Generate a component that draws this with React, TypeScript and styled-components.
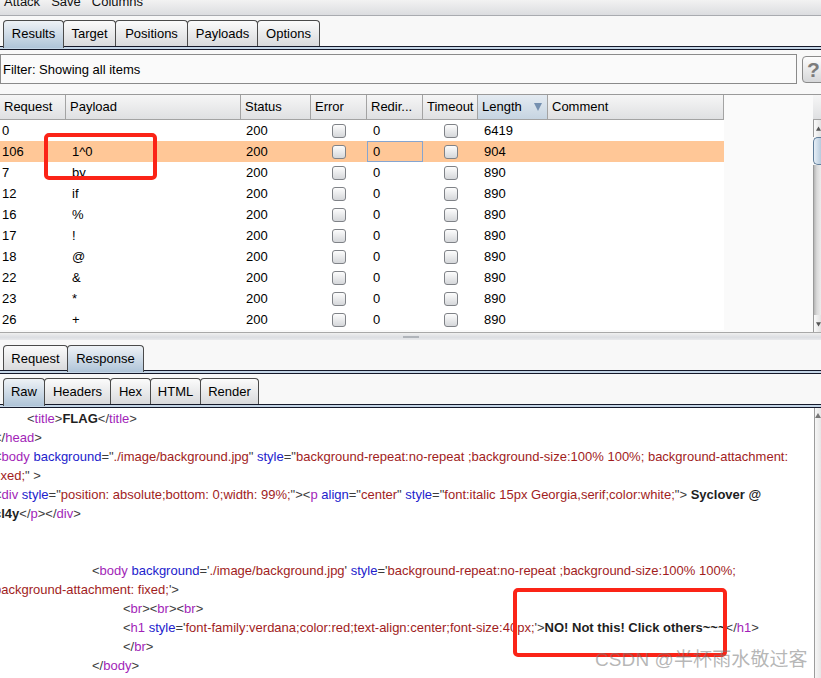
import React from "react";
import styled, { createGlobalStyle, css } from "styled-components";

const GlobalStyle = createGlobalStyle`
  html, body { margin: 0; padding: 0; }
  body {
    background: #f8f8f8;
    font-family: "Liberation Sans", Arial, sans-serif;
    font-size: 13px;
    color: #000;
    overflow: hidden;
  }
`;

const Root = styled.div`
  position: relative;
  width: 821px;
  height: 678px;
  overflow: hidden;
  display: flex;
  flex-direction: column;
  background: #f8f8f8;
`;

const MenuBar = styled.div`
  height: 15px;
  border-bottom: 1px solid #a9abb0;
  background: linear-gradient(#f2f2f2, #dcdde0);
  display: flex;
  gap: 11px;
  padding-left: 4px;
  overflow: hidden;
`;

const MenuItem = styled.span`
  font-size: 13px;
  line-height: 13px;
  margin-top: -5px;
  color: #111;
`;

const TabStrip = styled.div<{ $h: number }>`
  height: ${(p) => p.$h}px;
  display: flex;
  align-items: flex-end;
  padding-left: 3px;
  background: #f8f8f8;
`;

const Tab = styled.div<{ $w: number; $active?: boolean; $h: number }>`
  width: ${(p) => p.$w}px;
  height: ${(p) => p.$h}px;
  box-sizing: border-box;
  border: 1px solid #4a4a4a;
  border-bottom: none;
  border-radius: 4px 4px 0 0;
  margin-left: -1px;
  &:first-child { margin-left: 0; }
  display: flex;
  align-items: center;
  justify-content: center;
  font-size: 13px;
  color: #000;
  position: relative;
  background: linear-gradient(#fbfbfb, #d9dadc);
  ${(p) =>
    p.$active &&
    css`
      background: linear-gradient(#eef2f6, #afc4d8);
      z-index: 1;
      margin-bottom: -2px;
      height: ${p.$h + 2}px;
      padding-bottom: 2px;
    `}
`;

const TabBand = styled.div`
  height: 2px;
  border-top: 1px solid #15192a;
  border-bottom: 1px solid #15192a;
  background: #c4d5e6;
`;

const FilterSection = styled.div`
  height: 45px;
  border-bottom: 1px solid #9a9a9a;
  display: flex;
  align-items: flex-start;
  padding-top: 4px;
  box-sizing: border-box;
  gap: 5px;
`;

const FilterBox = styled.div`
  width: 797px;
  height: 30px;
  box-sizing: border-box;
  border: 1px solid #8a8a8a;
  background: #fafafa;
  display: flex;
  align-items: center;
  padding-left: 2px;
  font-size: 13px;
  flex-shrink: 0;
`;

const HelpButton = styled.div`
  width: 28px;
  height: 27px;
  margin-top: 2px;
  box-sizing: border-box;
  border: 1px solid #8a8a8a;
  border-radius: 4px;
  background: linear-gradient(#fdfdfd, #d6d7d9);
  display: flex;
  align-items: center;
  padding-left: 4px;
  font-size: 21px;
  font-weight: bold;
  color: #7c7c7c;
  flex-shrink: 0;
`;

const TableSection = styled.div`
  height: 238px;
  display: flex;
  border-bottom: 1px solid #a8a8a8;
  box-sizing: border-box;
`;

const Viewport = styled.div`
  flex: 1;
  background: #fafafa;
  display: flex;
  flex-direction: column;
  overflow: hidden;
`;

const cols = [66, 175, 70, 56, 56, 55, 70, 176];
const colTemplate = cols.map((c) => `${c}px`).join(" ") + " 1fr";

const HeaderRow = styled.div`
  display: grid;
  grid-template-columns: ${colTemplate};
  height: 25px;
  flex-shrink: 0;
`;

const HeadCell = styled.div<{ $sorted?: boolean }>`
  box-sizing: border-box;
  border-right: 1px solid #a3a3a3;
  border-bottom: 1px solid #a3a3a3;
  background: ${(p) =>
    p.$sorted ? "linear-gradient(#e4ebf2, #c6d4e1)" : "linear-gradient(#f6f6f6, #dfe0e2)"};
  display: flex;
  align-items: center;
  padding-left: 4px;
  padding-bottom: 1px;
  font-size: 13px;
  white-space: nowrap;
  overflow: hidden;
  position: relative;
`;

const HeadFill = styled.div`
  background: #fafafa;
`;

const SortArrow = styled.span`
  position: absolute;
  right: 5px;
  top: 8px;
  width: 0;
  height: 0;
  border-left: 4px solid transparent;
  border-right: 4px solid transparent;
  border-top: 8px solid #7590b0;
`;

const Row = styled.div<{ $sel?: boolean }>`
  display: grid;
  grid-template-columns: ${colTemplate};
  height: 21px;
  flex-shrink: 0;
  > div:not(:last-child) {
    background: ${(p) => (p.$sel ? "#ffc797" : "#ffffff")};
  }
`;

const Cell = styled.div<{ $pad?: number; $focus?: boolean }>`
  box-sizing: border-box;
  padding-left: ${(p) => p.$pad ?? 2}px;
  display: flex;
  align-items: center;
  font-size: 13px;
  white-space: nowrap;
  ${(p) =>
    p.$focus &&
    css`
      border: 1px solid #86a5d0;
      padding-left: ${(p.$pad ?? 2) - 1}px;
    `}
`;

const CheckCell = styled.div`
  display: flex;
  align-items: center;
  justify-content: center;
`;

const Check = styled.span`
  width: 14px;
  height: 14px;
  box-sizing: border-box;
  border: 1px solid #7f8287;
  border-radius: 3px;
  background: linear-gradient(#fdfdfd, #d5d7da);
`;

const RowFill = styled.div`
  background: #fafafa;
`;

const VScroll = styled.div`
  width: 8px;
  display: flex;
  flex-direction: column;
  flex-shrink: 0;
`;

const ScrollCorner = styled.div`
  height: 25px;
  border-bottom: 1px solid #a3a3a3;
  box-sizing: border-box;
  background: linear-gradient(#f6f6f6, #dfe0e2);
`;

const ScrollArrowBox = styled.div`
  height: 17px;
  background: linear-gradient(90deg, #fafafa, #e2e2e2);
  border-left: 1px solid #9a9a9a;
  display: flex;
  align-items: center;
  padding-left: 2px;
`;

const ScrollThumb = styled.div`
  height: 28px;
  box-sizing: border-box;
  border: 1px solid #5f7c98;
  border-right: none;
  border-radius: 5px 0 0 5px;
  background: linear-gradient(90deg, #e6eef6, #b7cbdd);
`;

const ScrollTrack = styled.div`
  flex: 1;
  border-left: 1px solid #9a9a9a;
  background: linear-gradient(90deg, #b6b6b6, #d9d9d9 40%, #ececec);
`;

const Splitter = styled.div`
  height: 7px;
  background: linear-gradient(#f0f0f0, #dcdee2 60%, #e8e9ec);
  display: flex;
  justify-content: center;
  align-items: center;
`;

const SplitHandle = styled.div`
  width: 16px;
  height: 2px;
  background: #b0b4ba;
`;

const EditorSection = styled.div`
  flex: 1;
  display: flex;
  background: #fff;
  overflow: hidden;
`;

const Editor = styled.div`
  flex: 1;
  overflow: hidden;
  padding-top: 1px;
  margin-left: -6px;
`;

const Line = styled.div<{ $indent?: number }>`
  height: 19px;
  line-height: 19px;
  white-space: pre;
  font-size: 13px;
  padding-left: ${(p) => p.$indent ?? 0}px;
  color: #3c3c3c;
`;

const Br = styled.span`
  color: #3c3c3c;
`;
const Tg = styled.span`
  color: #a21fb8;
`;
const At = styled.span`
  color: #2222cc;
`;
const Vl = styled.span`
  color: #a11d1d;
`;
const Tx = styled.span`
  color: #1e1e1e;
  font-weight: bold;
`;

const EditorScroll = styled.div`
  width: 6px;
  flex-shrink: 0;
  border-left: 1px solid #9c9c9c;
  background: linear-gradient(90deg, #f6f6f6, #e6e6e6);
  display: flex;
  justify-content: center;
  padding-top: 5px;
`;

const RedBox = styled.div<{ $x: number; $y: number; $w: number; $h: number }>`
  position: absolute;
  left: ${(p) => p.$x}px;
  top: ${(p) => p.$y}px;
  width: ${(p) => p.$w}px;
  height: ${(p) => p.$h}px;
  box-sizing: border-box;
  border: 4px solid #fb2417;
  border-radius: 5px;
  pointer-events: none;
`;

const Watermark = styled.div`
  position: absolute;
  left: 595px;
  top: 644px;
  font-family: "Liberation Sans", "Noto Sans CJK SC", sans-serif;
  font-size: 19px;
  color: rgba(120, 120, 120, 0.55);
  white-space: nowrap;
  letter-spacing: 0.1px;
  pointer-events: none;
`;

const UpArrow = ({ color = "#555" }: { color?: string }) => (
  <svg width="6" height="6" viewBox="0 0 6 6">
    <path d="M0 5 L3 0 L6 5 Z" fill={color} />
  </svg>
);
const DownArrow = ({ color = "#555" }: { color?: string }) => (
  <svg width="6" height="6" viewBox="0 0 6 6">
    <path d="M0 1 L3 6 L6 1 Z" fill={color} />
  </svg>
);

const rows = [
  { r: "0", p: "", len: "6419" },
  { r: "106", p: "1^0", len: "904", sel: true },
  { r: "7", p: "by", len: "890" },
  { r: "12", p: "if", len: "890" },
  { r: "16", p: "%", len: "890" },
  { r: "17", p: "!", len: "890" },
  { r: "18", p: "@", len: "890" },
  { r: "22", p: "&", len: "890" },
  { r: "23", p: "*", len: "890" },
  { r: "26", p: "+", len: "890" },
];

const headers = ["Request", "Payload", "Status", "Error", "Redir...", "Timeout", "Length", "Comment"];

export default function App() {
  return (
    <Root>
      <GlobalStyle />
      <MenuBar>
        <MenuItem>Attack</MenuItem>
        <MenuItem>Save</MenuItem>
        <MenuItem>Columns</MenuItem>
      </MenuBar>

      <TabStrip $h={30}>
        <Tab $w={61} $h={26} $active>Results</Tab>
        <Tab $w={53} $h={26}>Target</Tab>
        <Tab $w={73} $h={26}>Positions</Tab>
        <Tab $w={71} $h={26}>Payloads</Tab>
        <Tab $w={63} $h={26}>Options</Tab>
      </TabStrip>
      <TabBand />

      <FilterSection>
        <FilterBox>Filter: Showing all items</FilterBox>
        <HelpButton>?</HelpButton>
      </FilterSection>

      <TableSection>
        <Viewport>
          <HeaderRow>
            {headers.map((h) => (
              <HeadCell key={h} $sorted={h === "Length"}>
                {h}
                {h === "Length" && <SortArrow />}
              </HeadCell>
            ))}
            <HeadFill />
          </HeaderRow>
          {rows.map((row) => (
            <Row key={row.r} $sel={row.sel}>
              <Cell $pad={2}>{row.r}</Cell>
              <Cell $pad={6}>{row.p}</Cell>
              <Cell $pad={5}>200</Cell>
              <CheckCell>
                <Check />
              </CheckCell>
              <Cell $pad={6} $focus={row.sel}>0</Cell>
              <CheckCell>
                <Check />
              </CheckCell>
              <Cell $pad={6}>{row.len}</Cell>
              <Cell />
              <RowFill />
            </Row>
          ))}
        </Viewport>
        <VScroll>
          <ScrollCorner />
          <ScrollArrowBox>
            <UpArrow />
          </ScrollArrowBox>
          <ScrollThumb />
          <ScrollTrack />
          <ScrollArrowBox>
            <DownArrow />
          </ScrollArrowBox>
        </VScroll>
      </TableSection>

      <Splitter>
        <SplitHandle />
      </Splitter>

      <TabStrip $h={30}>
        <Tab $w={65} $h={25}>Request</Tab>
        <Tab $w={77} $h={25} $active>Response</Tab>
      </TabStrip>
      <TabBand />
      <TabStrip $h={30}>
        <Tab $w={42} $h={26} $active>Raw</Tab>
        <Tab $w={67} $h={26}>Headers</Tab>
        <Tab $w={41} $h={26}>Hex</Tab>
        <Tab $w={51} $h={26}>HTML</Tab>
        <Tab $w={59} $h={26}>Render</Tab>
      </TabStrip>
      <TabBand />

      <EditorSection>
        <Editor>
          <Line $indent={33}>
            <Br>&lt;</Br><Tg>title</Tg><Br>&gt;</Br><Tx>FLAG</Tx><Br>&lt;/</Br><Tg>title</Tg><Br>&gt;</Br>
          </Line>
          <Line>
            <Br>&lt;/</Br><Tg>head</Tg><Br>&gt;</Br>
          </Line>
          <Line>
            <Br>&lt;</Br><Tg>body</Tg> <At>background</At><Br>="</Br><Vl>./image/background.jpg</Vl><Br>"</Br> <At>style</At><Br>="</Br><Vl>background-repeat:no-repeat ;background-size:100% 100%; background-attachment:</Vl>
          </Line>
          <Line>
            <Vl>fixed;</Vl><Br>" &gt;</Br>
          </Line>
          <Line>
            <Br>&lt;</Br><Tg>div</Tg> <At>style</At><Br>="</Br><Vl>position: absolute;bottom: 0;width: 99%;</Vl><Br>"&gt;&lt;</Br><Tg>p</Tg> <At>align</At><Br>="</Br><Vl>center</Vl><Br>"</Br> <At>style</At><Br>="</Br><Vl>font:italic 15px Georgia,serif;color:white;</Vl><Br>"&gt;</Br><Tx> Syclover @</Tx>
          </Line>
          <Line>
            <Tx>cl4y</Tx><Br>&lt;/</Br><Tg>p</Tg><Br>&gt;&lt;/</Br><Tg>div</Tg><Br>&gt;</Br>
          </Line>
          <Line />
          <Line />
          <Line $indent={98}>
            <Br>&lt;</Br><Tg>body</Tg> <At>background</At><Br>='</Br><Vl>./image/background.jpg</Vl><Br>'</Br> <At>style</At><Br>='</Br><Vl>background-repeat:no-repeat ;background-size:100% 100%;</Vl>
          </Line>
          <Line>
            <Vl>background-attachment: fixed;</Vl><Br>'&gt;</Br>
          </Line>
          <Line $indent={129}>
            <Br>&lt;</Br><Tg>br</Tg><Br>&gt;&lt;</Br><Tg>br</Tg><Br>&gt;&lt;</Br><Tg>br</Tg><Br>&gt;</Br>
          </Line>
          <Line $indent={129}>
            <Br>&lt;</Br><Tg>h1</Tg> <At>style</At><Br>='</Br><Vl>font-family:verdana;color:red;text-align:center;font-size:40px;</Vl><Br>'&gt;</Br><Tx>NO! Not this! Click others~~~</Tx><Br>&lt;/</Br><Tg>h1</Tg><Br>&gt;</Br>
          </Line>
          <Line $indent={129}>
            <Br>&lt;/</Br><Tg>br</Tg><Br>&gt;</Br>
          </Line>
          <Line $indent={98}>
            <Br>&lt;/</Br><Tg>body</Tg><Br>&gt;</Br>
          </Line>
        </Editor>
        <EditorScroll>
          <UpArrow color="#777" />
        </EditorScroll>
      </EditorSection>

      <RedBox $x={44} $y={133} $w={113} $h={47} />
      <RedBox $x={513} $y={588} $w={214} $h={69} />
      <Watermark>CSDN @半杯雨水敬过客</Watermark>
    </Root>
  );
}
